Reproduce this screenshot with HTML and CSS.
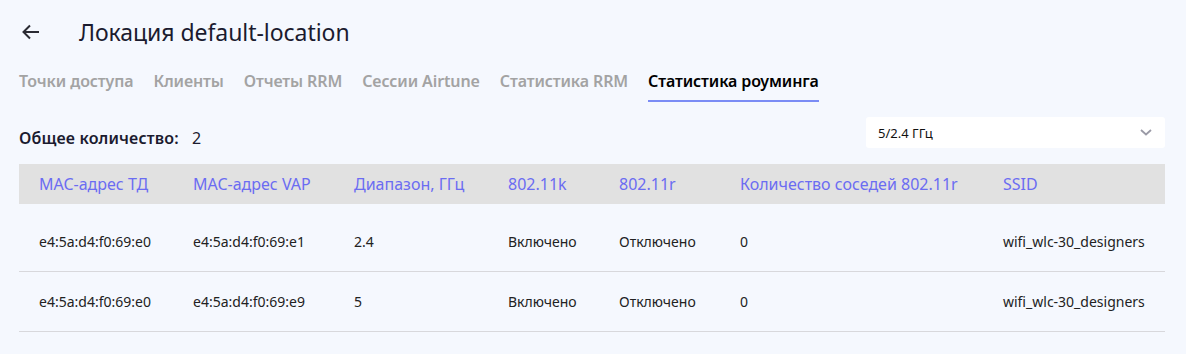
FILE: index.html
```html
<!DOCTYPE html>
<html lang="ru">
<head>
<meta charset="utf-8">
<link rel="stylesheet" href="styles.css">
</head>
<body>
<div class="page">
  <header class="head">
    <span class="back">
      <svg width="18" height="16" viewBox="0 0 18 16"><path d="M17 8H2M8 1.5L1.5 8 8 14.5" fill="none" stroke="#2b2b33" stroke-width="2"/></svg>
    </span>
    <h1 class="title">Локация default-location</h1>
  </header>
  <nav class="tabs">
    <span class="tab">Точки доступа</span>
    <span class="tab">Клиенты</span>
    <span class="tab">Отчеты RRM</span>
    <span class="tab">Сессии Airtune</span>
    <span class="tab">Статистика RRM</span>
    <span class="tab active">Статистика роуминга</span>
  </nav>
  <div class="toolbar">
    <div class="total"><b>Общее количество:</b> <span>2</span></div>
    <div class="select">
      <span>5/2.4 ГГц</span>
      <svg width="12" height="7" viewBox="0 0 12 7"><path d="M1 1l5 4.5L11 1" fill="none" stroke="#9a9aa6" stroke-width="1.8"/></svg>
    </div>
  </div>
  <div class="table">
    <div class="row hrow">
      <div class="c c1">MAC-адрес ТД</div>
      <div class="c c2">MAC-адрес VAP</div>
      <div class="c c3">Диапазон, ГГц</div>
      <div class="c c4">802.11k</div>
      <div class="c c5">802.11r</div>
      <div class="c c6">Количество соседей 802.11r</div>
      <div class="c c7">SSID</div>
    </div>
    <div class="tbody">
      <div class="row drow">
        <div class="c c1">e4:5a:d4:f0:69:e0</div>
        <div class="c c2">e4:5a:d4:f0:69:e1</div>
        <div class="c c3">2.4</div>
        <div class="c c4">Включено</div>
        <div class="c c5">Отключено</div>
        <div class="c c6">0</div>
        <div class="c c7">wifi_wlc-30_designers</div>
      </div>
      <div class="row drow">
        <div class="c c1">e4:5a:d4:f0:69:e0</div>
        <div class="c c2">e4:5a:d4:f0:69:e9</div>
        <div class="c c3">5</div>
        <div class="c c4">Включено</div>
        <div class="c c5">Отключено</div>
        <div class="c c6">0</div>
        <div class="c c7">wifi_wlc-30_designers</div>
      </div>
    </div>
  </div>
</div>
</body>
</html>
```
FILE: styles.css
```css
* { box-sizing: border-box; }
html, body { margin: 0; padding: 0; }
body {
  background: #f5f8fe;
  font-family: "Noto Sans", "Open Sans", sans-serif;
  color: #222;
  width: 1186px;
  height: 354px;
  overflow: hidden;
}
.page { padding: 0 21px 0 19px; }
.head {
  display: flex;
  align-items: center;
  height: 68px;
  padding: 0 0 4px 3px;
}
.back { display: flex; width: 57px; }
.title {
  margin: 0;
  font-size: 23px;
  font-weight: 400;
  color: #1b1b2f;
  letter-spacing: -0.05px;
}
.tabs {
  display: flex;
  gap: 20px;
  height: 34px;
  align-items: flex-start;
}
.tab {
  font-size: 16px;
  font-weight: 600;
  color: #a3a3a3;
  line-height: 26px;
  height: 34px;
  letter-spacing: -0.12px;
}
.tab.active {
  color: #000;
  border-bottom: 2px solid #7b8cf5;
}
.toolbar {
  display: flex;
  justify-content: space-between;
  align-items: center;
  margin-top: 15px;
  height: 31px;
}
.total { font-size: 16px; color: #1b1b2f; padding-top: 10px; letter-spacing: 0.15px; }
.total b { font-weight: 600; margin-right: 9px; }
.select {
  width: 299px;
  height: 31px;
  background: #fff;
  border-radius: 3px;
  display: flex;
  align-items: center;
  justify-content: space-between;
  padding: 0 13px 0 12px;
  font-size: 13px;
  color: #111;
}
.table { margin-top: 16px; }
.row { display: flex; align-items: center; }
.hrow {
  height: 40px;
  background: #e1e1e1;
  color: #6b6cf2;
  font-size: 16px;
}
.tbody { padding-top: 8px; }
.drow {
  height: 60px;
  border-bottom: 1px solid #d8d8dc;
  font-size: 14px;
  color: #222;
}
.c { padding-left: 20px; white-space: nowrap; }
.c1 { width: 154px; }
.c2 { width: 161px; }
.c3 { width: 154px; }
.c4 { width: 111px; }
.c5 { width: 121px; }
.c6 { width: 263px; }
.c7 { flex: 1; }
```
